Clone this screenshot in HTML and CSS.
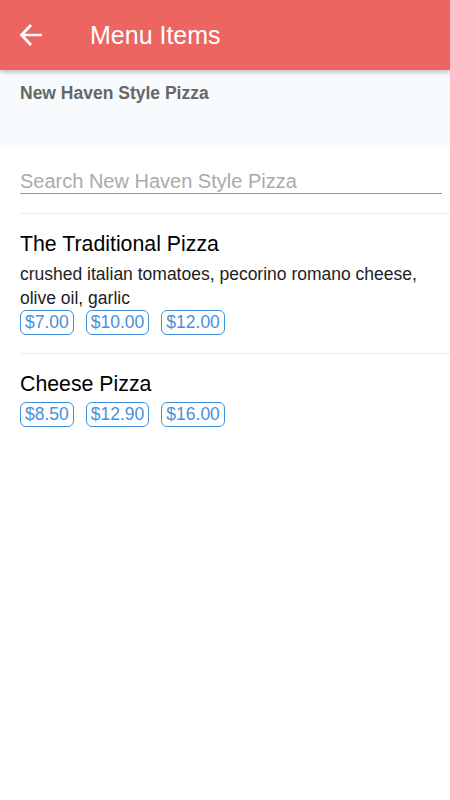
FILE: index.html
```html
<!DOCTYPE html>
<html lang="en">
<head>
    <meta charset="UTF-8">
    <meta name="viewport" content="width=device-width, initial-scale=1.0">
    <title>Menu Items</title>
    <link rel="stylesheet" href="styles.css">
</head>
<body>
    <header class="toolbar">
        <button class="back-button" aria-label="Back">
            <svg width="24" height="24" viewBox="0 0 24 24">
                <path d="M23 12H2.5M12 2L2.5 12L12 22" fill="none" stroke="#fff" stroke-width="2.7"/>
            </svg>
        </button>
        <h1 class="toolbar-title">Menu Items</h1>
    </header>

    <div class="category">
        <h2 class="category-name">New Haven Style Pizza</h2>
    </div>

    <div class="search">
        <input type="text" class="search-input" placeholder="Search New Haven Style Pizza">
    </div>

    <ul class="menu-list">
        <li class="menu-item">
            <div class="item-name">The Traditional Pizza</div>
            <div class="item-desc">crushed italian tomatoes, pecorino romano cheese, olive oil, garlic</div>
            <div class="prices">
                <span class="price">$7.00</span>
                <span class="price">$10.00</span>
                <span class="price">$12.00</span>
            </div>
        </li>
        <li class="menu-item">
            <div class="item-name">Cheese Pizza</div>
            <div class="prices">
                <span class="price">$8.50</span>
                <span class="price">$12.90</span>
                <span class="price">$16.00</span>
            </div>
        </li>
    </ul>
</body>
</html>
```

FILE: styles.css
```css
/* Common styles */
body {
    font-family: "Liberation Sans", Arial, sans-serif;
    background-color: #ffffff;
    margin: 0;
    color: #000;
}

.toolbar {
    position: relative;
    z-index: 1;
    height: 70px;
    background-color: #ec6560;
    display: flex;
    align-items: center;
    box-shadow: 0px 2px 5px rgba(0, 0, 0, 0.25);
}

.back-button {
    background: none;
    border: none;
    padding: 0;
    margin: 0 0 0 19px;
    width: 24px;
    height: 24px;
    display: flex;
    cursor: pointer;
}

.toolbar-title {
    margin: 0 0 0 47px;
    font-size: 25px;
    font-weight: normal;
    color: #ffffff;
    line-height: 30px;
}

.category {
    background-color: #f7fbfe;
    height: 78px;
    padding: 13px 20px 0;
    box-sizing: border-box;
}

.category-name {
    margin: 0;
    font-size: 17.5px;
    line-height: 20px;
    font-weight: bold;
    color: #666;
}

.search {
    padding: 21px 8px 19px 20px;
}

.search-input {
    display: block;
    width: 100%;
    box-sizing: border-box;
    border: none;
    border-bottom: 1px solid #999;
    padding: 0;
    height: 25px;
    font-family: inherit;
    font-size: 20px;
    line-height: 24px;
    color: #333;
    background: transparent;
    outline: none;
}

.search-input::placeholder {
    color: #aaa;
}

.menu-list {
    list-style: none;
    margin: 0;
    padding: 0 0 0 20px;
}

.menu-item {
    border-top: 1px solid #ececec;
    padding: 16px 0 18px;
}

.item-name {
    font-size: 21.3px;
    line-height: 28px;
    margin-bottom: 4px;
}

.item-desc {
    font-size: 17.5px;
    line-height: 24px;
    color: #222;
    padding-right: 20px;
}

.prices {
    display: flex;
    gap: 12px;
}

.price {
    border: 1px solid #3d8fdc;
    border-radius: 6px;
    padding: 0 4px;
    font-size: 17.5px;
    line-height: 23px;
    color: #4a90d9;
}
```
